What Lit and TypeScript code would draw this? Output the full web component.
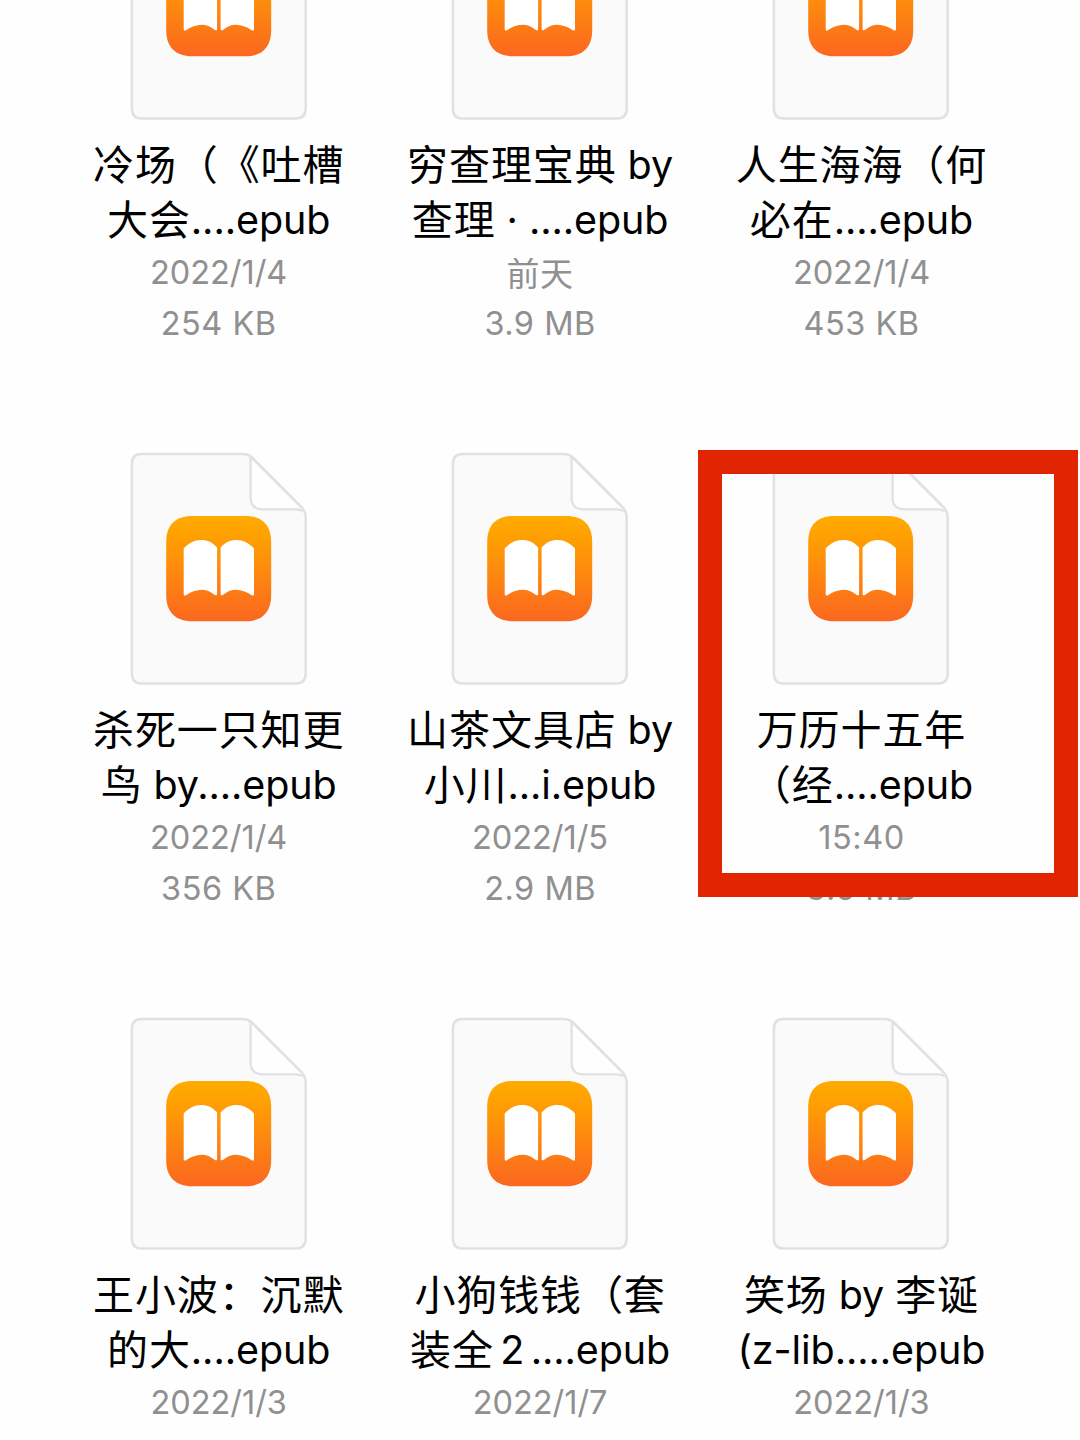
import { LitElement, html, css } from "lit";
import { customElement, property } from "lit/decorators.js";
import { classMap } from "lit/directives/class-map.js";

interface BookFile {
  lines: string[];
  date: string;
  size: string;
}

const FILES: BookFile[] = [
  { lines: ["冷场（《吐槽", "大会....epub"], date: "2022/1/4", size: "254 KB" },
  { lines: ["穷查理宝典 by", "查理 · ....epub"], date: "前天", size: "3.9 MB" },
  { lines: ["人生海海（何", "必在....epub"], date: "2022/1/4", size: "453 KB" },
  { lines: ["杀死一只知更", "鸟 by....epub"], date: "2022/1/4", size: "356 KB" },
  { lines: ["山茶文具店 by", "小川...i.epub"], date: "2022/1/5", size: "2.9 MB" },
  { lines: ["万历十五年", "（经....epub"], date: "15:40", size: "3.6 MB" },
  { lines: ["王小波：沉默", "的大....epub"], date: "2022/1/3", size: "" },
  { lines: ["小狗钱钱（套", "装全\u20062\u2006....epub"], date: "2022/1/7", size: "" },
  { lines: ["笑场 by 李诞", "(z-lib.....epub"], date: "2022/1/3", size: "" },
];

/** Splits a string into alternating Han and Latin runs so each can be tracked separately. */
const runs = (text: string) => text.match(/[\u3000-\uffff]+|[^\u3000-\uffff]+/g) ?? [];
const spans = (text: string) =>
  runs(text).map((r) => (/[\u3000-\uffff]/.test(r) ? html`<span class="han">${r}</span>` : html`<span class="latin">${r}</span>`));

@customElement("epub-icon")
export class EpubIcon extends LitElement {
  static styles = css`
    :host { display: block; width: 178px; height: 234px; }
    svg { display: block; }
  `;
  render() {
    return html`
      <svg width="178" height="234" viewBox="0 0 178 234" fill="none">
        <defs>
          <linearGradient id="g" x1="0" y1="0" x2="0" y2="1">
            <stop offset="0" stop-color="#ffab00" />
            <stop offset="0.2" stop-color="#ffa002" />
            <stop offset="1" stop-color="#fb6720" />
          </linearGradient>
        </defs>
        <path d="M11.500 2H112.500C117 2 120 3.400 122.500 5.900L170.500 54.100C174 57.400 175.700 61 175.700 66V221.500Q175.700 231.500 165.900 231.500H11.500Q1.900 231.500 1.900 221.500V11.800Q1.900 2 11.500 2Z" fill="#fafafa" stroke="#e1e1e1" stroke-width="2.500" />
        <path d="M120.600 6V45.500Q120.600 57.300 132.400 57.300H166C169 57.300 171 57 172 56.400L122.500 6.100Z" fill="#fefefe" />
        <path d="M120.600 5V45.500Q120.600 57.300 132.400 57.300H166Q170 57.300 172.600 59" stroke="#e1e1e1" stroke-width="2.300" />
        <path d="M120 4L172 56" stroke="#e1e1e1" stroke-width="2.300" />
        <path d="M62 64H115.500C132 64 141.200 73 141.200 90V143.200C141.200 160 132 169.200 115.500 169.200H62C45.500 169.200 36.200 160 36.200 143.200V90C36.200 73 45.500 64 62 64Z" fill="url(#g)" />
        <path d="M53.700 96.600C58.500 91 64.500 88 71.200 88C77.500 88 82.500 90.300 87.100 95.500V142C87.100 143.500 85.800 143.700 84.800 142.900C80.500 139.500 76.500 137.700 71.700 137.700C66.500 137.700 61 139.800 56.400 143C55 143.900 53.700 143.700 53.700 142Z" fill="#fff" />
        <path d="M124 96.600C119.200 91 113.200 88 106.500 88C100.200 88 95.200 90.300 90.600 95.500V142C90.600 143.500 91.900 143.700 92.900 142.900C97.200 139.500 101.200 137.700 106 137.700C111.200 137.700 116.700 139.800 121.300 143C122.700 143.900 124 143.700 124 142Z" fill="#fff" />
      </svg>
    `;
  }
}

@customElement("file-tile")
export class FileTile extends LitElement {
  @property({ attribute: false }) file!: BookFile;

  static styles = css`
    :host {
      display: flex;
      flex-direction: column;
      align-items: center;
      font-family: Inter, "Noto Sans CJK SC", sans-serif;
      text-spacing-trim: space-all;
      text-autospace: no-autospace;
    }
    .title {
      margin-top: 16px;
      display: flex;
      flex-direction: column;
      align-items: center;
      color: #000;
      font-size: 39.5px;
      line-height: 56px;
    }
    .line { white-space: pre; height: 55px; }
    .title .han { font-size: 41px; letter-spacing: 0.9px; line-height: 0; vertical-align: -1px; }
    .title .latin { letter-spacing: -0.1px; }
    .meta {
      display: flex;
      flex-direction: column;
      align-items: center;
      color: #909090;
      font-size: 32.5px;
      line-height: 51px;
      letter-spacing: 0.5px;
      white-space: pre;
    }
    .calendar { letter-spacing: -0.05px; }
    .meta .han { font-size: 33px; line-height: 0; vertical-align: -2px; }
  `;

  render() {
    const { lines, date, size } = this.file;
    return html`
      <epub-icon></epub-icon>
      <div class="title">${lines.map((l) => html`<div class="line">${spans(l)}</div>`)}</div>
      <div class="meta">
        <div class=${classMap({ calendar: date.includes("/") })}>${spans(date)}</div>
        <div>${size}</div>
      </div>
    `;
  }
}

@customElement("app-root")
export class AppRoot extends LitElement {
  static styles = css`
    :host {
      display: block;
      position: relative;
      width: 1080px;
      height: 1440px;
      overflow: hidden;
      background: #fefefe;
    }
    .grid {
      display: grid;
      grid-template-columns: repeat(3, 321.4px);
      grid-auto-rows: 565px;
      margin: -113px 0 0 58px;
    }
    .highlight {
      position: absolute;
      left: 698px;
      top: 450px;
      width: 380px;
      height: 447px;
      box-sizing: border-box;
      border: 24px solid #e12402;
    }
  `;

  render() {
    return html`
      <div class="grid" lang="zh-CN">${FILES.map((f) => html`<file-tile .file=${f}></file-tile>`)}</div>
      <div class="highlight"></div>
    `;
  }
}
